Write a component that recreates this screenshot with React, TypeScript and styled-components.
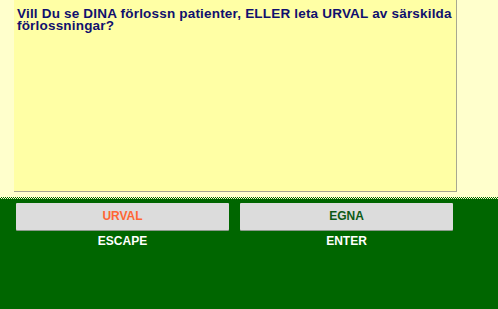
import React from 'react';
import styled, { createGlobalStyle } from 'styled-components';

const GlobalStyle = createGlobalStyle`
  html, body {
    margin: 0;
    padding: 0;
    height: 100%;
    background: #ffffcc;
  }
  #root {
    height: 100%;
  }
`;

const Page = styled.div`
  height: 100%;
  display: flex;
  flex-direction: column;
  font-family: 'Liberation Sans', Arial, sans-serif;
`;

const TopArea = styled.div`
  background: #ffffcc;
  padding: 0 0 5px 14px;
`;

const MessagePanel = styled.div`
  box-sizing: border-box;
  width: 443px;
  height: 192px;
  background: #ffffa5;
  border-right: 1px solid #a8a890;
  border-bottom: 1px solid #a8a890;
  padding: 8px 0 0 3px;
  color: #10106e;
  font-size: 13.5px;
  letter-spacing: 0.19px;
  font-weight: bold;
  line-height: 12px;
`;

const Dither = styled.div`
  height: 2px;
  background-color: #ffffcc;
  background-image: repeating-conic-gradient(#006600 0 25%, #ffffcc 0 50%);
  background-size: 2px 2px;
`;

const BottomArea = styled.div`
  flex: 1;
  background: #006600;
  padding: 4px 0 0 16px;
`;

const ActionGrid = styled.div`
  display: grid;
  grid-template-columns: 213px 213px;
  column-gap: 11px;
`;

const Action = styled.div`
  display: flex;
  flex-direction: column;
  align-items: center;
  gap: 4px;
`;

const KeyButton = styled.button<{ $tone: string }>`
  width: 213px;
  height: 27px;
  border: none;
  border-radius: 1px;
  background: #dcdcdc;
  box-shadow: 0 1px 0 #8a9a8a;
  color: ${(p) => p.$tone};
  font-family: 'Liberation Sans', Arial, sans-serif;
  font-size: 12px;
  font-weight: bold;
  padding: 0 0 1px;
  cursor: pointer;
`;

const KeyLabel = styled.span`
  color: #ffffff;
  font-size: 12px;
  font-weight: bold;
`;

const actions = [
  { text: 'URVAL', key: 'ESCAPE', tone: '#ff6633' },
  { text: 'EGNA', key: 'ENTER', tone: '#0d5a16' },
];

export default function App() {
  return (
    <>
      <GlobalStyle />
      <Page>
        <TopArea>
          <MessagePanel>
            Vill Du se DINA förlossn patienter, ELLER leta URVAL av särskilda förlossningar?
          </MessagePanel>
        </TopArea>
        <Dither />
        <BottomArea>
          <ActionGrid>
            {actions.map((a) => (
              <Action key={a.key}>
                <KeyButton $tone={a.tone}>{a.text}</KeyButton>
                <KeyLabel>{a.key}</KeyLabel>
              </Action>
            ))}
          </ActionGrid>
        </BottomArea>
      </Page>
    </>
  );
}
